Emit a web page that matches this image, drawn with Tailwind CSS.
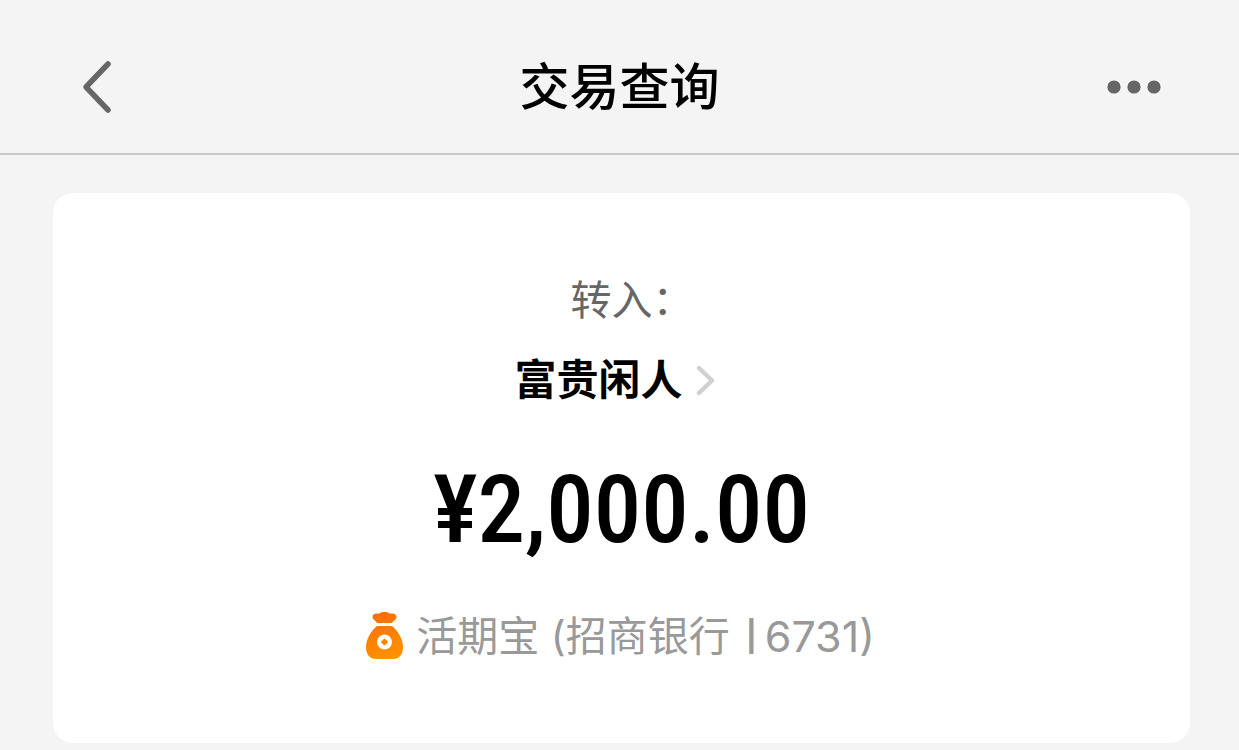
<!DOCTYPE html>
<html lang="zh-CN">
<head>
<meta charset="utf-8">
<meta name="viewport" content="width=device-width, initial-scale=1">
<title>交易查询</title>
<script src="https://cdn.jsdelivr.net/npm/@tailwindcss/browser@4"></script>
</head>
<body class="min-h-screen bg-[#f4f4f4] font-['Inter','Noto_Sans_CJK_SC',sans-serif] text-black">
<header class="grid grid-cols-[1fr_auto_1fr] items-center border-b-2 border-[#cacaca] px-[76px] pt-[53px] pb-8">
  <button type="button" aria-label="返回" class="justify-self-start">
    <svg class="block" width="40" height="60" viewBox="0 0 40 60" fill="none" stroke="#666" stroke-width="5.500" stroke-linecap="round" stroke-linejoin="round"><path d="M32 7L10 30L32 53"/></svg>
  </button>
  <h1 class="text-[50px] leading-[68px] font-medium">交易查询</h1>
  <button type="button" aria-label="更多" class="justify-self-end">
    <svg class="block" width="58" height="20" viewBox="0 0 58 20" fill="#666"><circle cx="9" cy="10" r="6.600"/><circle cx="29" cy="10" r="6.600"/><circle cx="49" cy="10" r="6.600"/></svg>
  </button>
</header>
<main class="pt-[38px] pr-[49px] pb-[6px] pl-[53px]">
  <section class="flex flex-col items-center rounded-[20px] bg-white pt-[77px] pb-[77px]">
    <p class="flex text-[41px] leading-[60px] text-[#666]">转入<span class="w-5">：</span></p>
    <a href="#" class="mt-5 flex items-center gap-3 pr-3 text-[42px] leading-[60px] font-bold">富贵闲人
      <svg width="22" height="32" viewBox="0 0 22 32" fill="none" stroke="#d0d0d0" stroke-width="4.500" stroke-linecap="round" stroke-linejoin="round"><path d="M4 4L17 16.500L4 29"/></svg>
    </a>
    <p class="mt-[50px] font-['Roboto_Condensed',sans-serif] text-[95px] leading-[100px] font-medium">¥2,000.00</p>
    <p class="mt-[46px] flex items-center gap-3 pr-1 text-[41px] leading-[60px] text-[#999]">
      <svg width="40" height="50" viewBox="0 0 40 50"><defs><linearGradient id="bag" gradientUnits="userSpaceOnUse" x1="12" y1="0" x2="28" y2="50"><stop offset="0" stop-color="#ff6a00"/><stop offset="1" stop-color="#ff9500"/></linearGradient></defs><g fill="url(#bag)"><path d="M13 12C12 9.500 8.500 9 8.500 6C8.500 3 11.500 1.700 15 2.800C16 1.600 18 1 20.500 1C23 1 25 1.600 26 2.800C29.500 1.700 32.500 3 32.500 6C32.500 9 29 9.500 28 12Z"/><path d="M13 15H28C34 20 39 28 39 36C39 44 35 48 29 48H12C6 48 2 44 2 36C2 28 7 20 13 15Z"/></g><circle cx="20.500" cy="31" r="7.500" fill="#fff"/><rect x="17.800" y="28.300" width="5.400" height="5.400" rx="1" fill="#ff8500" transform="rotate(45 20.500 31)"/></svg>
      <span class="flex items-center whitespace-pre"><span>活期宝 (招商银行</span><span class="mr-2 ml-4 text-[30px] font-bold">|</span><span class="text-[43px]">6731)</span></span>
    </p>
  </section>
</main>
</body>
</html>
